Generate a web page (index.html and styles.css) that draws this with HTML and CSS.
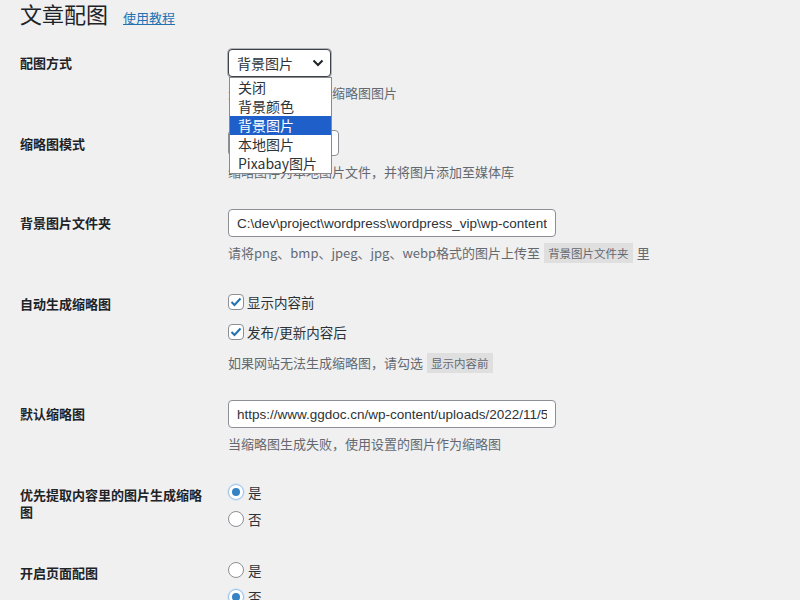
FILE: index.html
```html
<!DOCTYPE html>
<html lang="zh-CN">
<head>
    <meta charset="UTF-8">
    <meta name="viewport" content="width=device-width, initial-scale=1.0">
    <title>文章配图</title>
    <link rel="stylesheet" href="styles.css">
</head>
<body>
    <div class="wrap">
        <h1 class="wrap__title">文章配图 <a href="#" class="wrap__link">使用教程</a></h1>

        <div class="form-table">
            <div class="form-row">
                <div class="form-row__label">配图方式</div>
                <div class="form-row__field">
                    <div class="select select--open">
                        <span class="select__value">背景图片</span>
                        <svg class="select__arrow" width="12" height="8" viewBox="0 0 12 8"><path d="M1.5 1.5 L6 6 L10.5 1.5" fill="none" stroke="#1d2327" stroke-width="2"/></svg>
                        <ul class="select__list">
                            <li class="select__option">关闭</li>
                            <li class="select__option">背景颜色</li>
                            <li class="select__option select__option--active">背景图片</li>
                            <li class="select__option">本地图片</li>
                            <li class="select__option">Pixabay图片</li>
                        </ul>
                    </div>
                    <p class="description">选择哪种方式生成缩略图图片</p>
                </div>
            </div>

            <div class="form-row">
                <div class="form-row__label">缩略图模式</div>
                <div class="form-row__field">
                    <div class="select select--small">
                        <span class="select__value">本地</span>
                    </div>
                    <p class="description">缩略图存为本地图片文件，并将图片添加至媒体库</p>
                </div>
            </div>

            <div class="form-row">
                <div class="form-row__label">背景图片文件夹</div>
                <div class="form-row__field">
                    <input type="text" class="text-input" value="C:\dev\project\wordpress\wordpress_vip\wp-content\uploads\">
                    <p class="description">请将png、bmp、jpeg、jpg、webp格式的图片上传至<code>背景图片文件夹</code>里</p>
                </div>
            </div>

            <div class="form-row">
                <div class="form-row__label">自动生成缩略图</div>
                <div class="form-row__field">
                    <label class="choice"><span class="checkbox"><svg width="12" height="10" viewBox="0 0 12 10"><path d="M1.5 5 L4.5 8 L10.5 1.5" fill="none" stroke="#2271b1" stroke-width="2"/></svg></span>显示内容前</label>
                    <label class="choice"><span class="checkbox"><svg width="12" height="10" viewBox="0 0 12 10"><path d="M1.5 5 L4.5 8 L10.5 1.5" fill="none" stroke="#2271b1" stroke-width="2"/></svg></span>发布/更新内容后</label>
                    <p class="description description--spaced">如果网站无法生成缩略图，请勾选<code>显示内容前</code></p>
                </div>
            </div>

            <div class="form-row">
                <div class="form-row__label">默认缩略图</div>
                <div class="form-row__field">
                    <input type="text" class="text-input" value="https://www.ggdoc.cn/wp-content/uploads/2022/11/5.jpg">
                    <p class="description">当缩略图生成失败，使用设置的图片作为缩略图</p>
                </div>
            </div>

            <div class="form-row">
                <div class="form-row__label">优先提取内容里的图片生成缩略图</div>
                <div class="form-row__field">
                    <label class="choice choice--radio"><span class="radio radio--checked"></span>是</label>
                    <label class="choice choice--radio"><span class="radio"></span>否</label>
                </div>
            </div>

            <div class="form-row">
                <div class="form-row__label">开启页面配图</div>
                <div class="form-row__field">
                    <label class="choice choice--radio"><span class="radio"></span>是</label>
                    <label class="choice choice--radio"><span class="radio radio--checked"></span>否</label>
                </div>
            </div>
        </div>
    </div>
</body>
</html>
```

FILE: styles.css
```css
/* Global Styles */
body, html {
    margin: 0;
    padding: 0;
    background: #f0f0f1;
    color: #1d2327;
    font-family: "Noto Sans CJK SC", "Noto Sans", sans-serif;
}

.wrap {
    padding: 0 20px;
}

.wrap__title {
    display: flex;
    align-items: baseline;
    gap: 15px;
    margin: 2px 0 0;
    font-size: 22px;
    font-weight: 400;
    line-height: 22px;
}

.wrap__link {
    font-size: 13px;
    color: #2271b1;
    text-decoration: underline;
}

.form-table {
    margin-top: 5px;
}

.form-row {
    display: grid;
    grid-template-columns: 190px 1fr;
    column-gap: 18px;
}

.form-row__label {
    padding: 20px 0;
    font-size: 13px;
    font-weight: 700;
    line-height: 17px;
}

.form-row__field {
    padding: 15px 0 12px;
    font-size: 13px;
    line-height: 20px;
}

.description {
    margin: 6px 0 0;
    color: #646970;
    font-size: 13px;
    line-height: 20px;
}

.description--spaced {
    margin-top: 6px;
}

.description code {
    display: inline-block;
    margin: 0 4px;
    padding: 0 4px;
    font-family: inherit;
    font-size: 11.5px;
    line-height: 20px;
    vertical-align: top;
    background: rgba(0, 0, 0, 0.07);
}

/* Select */
.select {
    position: relative;
    display: flex;
    align-items: center;
    justify-content: space-between;
    box-sizing: border-box;
    width: 103px;
    height: 28px;
    padding: 0 6px 0 8px;
    background: #fff;
    border: 1px solid #8c8f94;
    border-radius: 4px;
    color: #2c3338;
    font-size: 14px;
}

.select--open {
    border-color: #3c434a;
    box-shadow: 0 0 0 1px rgba(60, 67, 74, 0.35);
}

.select--small {
    width: 111px;
    height: 26px;
}

.select__list {
    position: absolute;
    top: 27px;
    left: 0;
    z-index: 10;
    width: 101px;
    margin: 0;
    padding: 0;
    list-style: none;
    background: #fff;
    border: 1px solid #8a8a8a;
}

.select__option {
    height: 19px;
    padding-left: 8px;
    font-size: 14px;
    line-height: 19px;
    color: #2c3338;
    white-space: nowrap;
}

.select__option--active {
    background: #1f5fc9;
    color: #fff;
}

/* Text input */
.text-input {
    display: block;
    box-sizing: border-box;
    width: 328px;
    height: 28px;
    padding: 0 8px;
    background: #fff;
    border: 1px solid #8c8f94;
    border-radius: 4px;
    color: #2c3338;
    font-family: "Liberation Sans", sans-serif;
    font-size: 13.5px;
}

/* Checkbox & radio */
.choice {
    display: flex;
    align-items: center;
    gap: 3px;
    height: 30px;
    margin-top: -3px;
    color: #2c3338;
    font-size: 13.5px;
}

.choice + .choice {
    margin-top: 0;
}

.choice--radio {
    gap: 4px;
    height: 27px;
}

.checkbox {
    display: flex;
    align-items: center;
    justify-content: center;
    box-sizing: border-box;
    width: 16px;
    height: 16px;
    background: #fff;
    border: 1px solid #8c8f94;
    border-radius: 4px;
}

.radio {
    position: relative;
    box-sizing: border-box;
    width: 16px;
    height: 16px;
    background: #fff;
    border: 1px solid #8c8f94;
    border-radius: 50%;
}

.radio--checked {
    border-color: #9ec2e6;
    box-shadow: 0 0 0 1px #d6e6f5;
}

.radio--checked::after {
    content: "";
    position: absolute;
    top: 3px;
    left: 3px;
    width: 8px;
    height: 8px;
    border-radius: 50%;
    background: #3582c4;
}
```
